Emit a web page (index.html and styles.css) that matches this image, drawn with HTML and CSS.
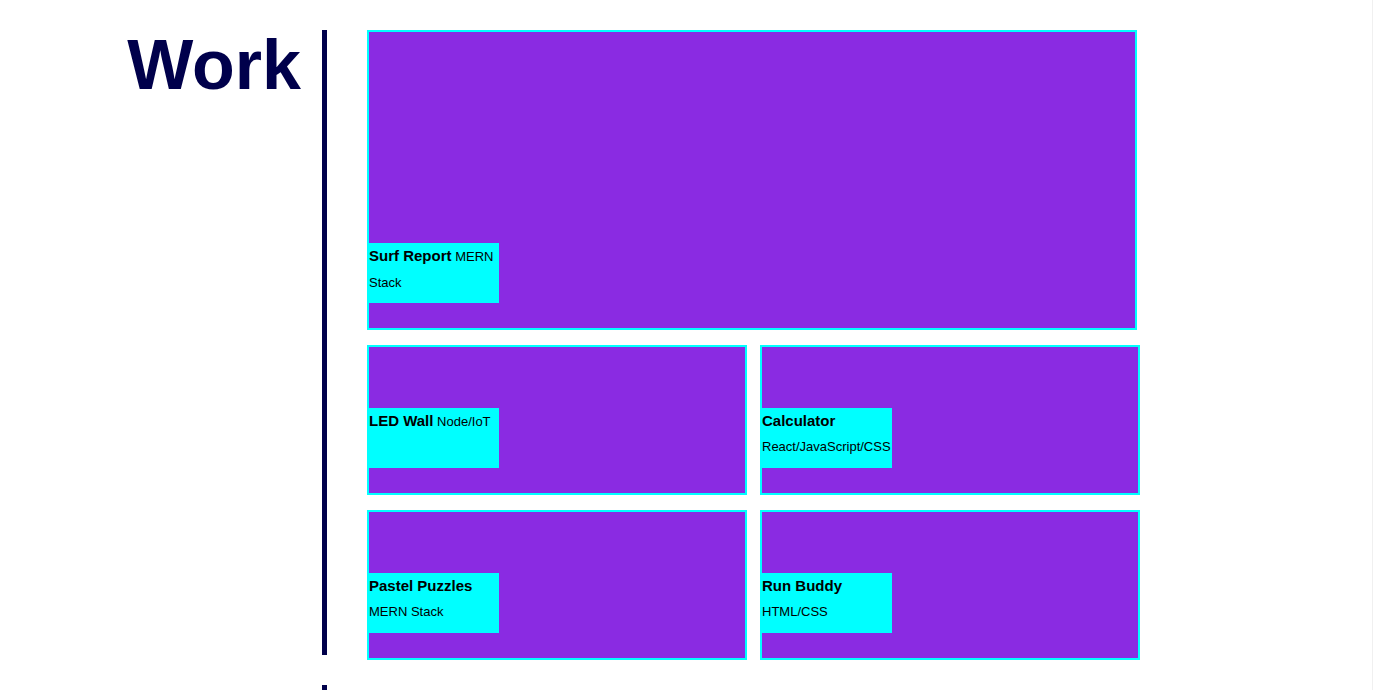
FILE: index.html
```
<!DOCTYPE html>
<html lang="en">
<head>
<meta charset="utf-8">
<title>Work</title>
<link rel="stylesheet" href="styles.css">
</head>
<body>
<main class="page">
  <section class="section">
    <h2 class="section-title">Work</h2>
    <div class="projects">
      <article class="card card-featured"><div class="label"><h3>Surf Report</h3> <span>MERN Stack</span></div></article>
      <article class="card"><div class="label"><h3>LED Wall</h3> <span>Node/IoT</span></div></article>
      <article class="card"><div class="label"><h3>Calculator</h3> <span>React/JavaScript/CSS</span></div></article>
      <article class="card"><div class="label"><h3>Pastel Puzzles</h3> <span>MERN Stack</span></div></article>
      <article class="card"><div class="label"><h3>Run Buddy</h3> <span>HTML/CSS</span></div></article>
    </div>
  </section>
  <section class="section">
    <div class="section-title"></div>
    <div class="projects"></div>
  </section>
</main>
</body>
</html>
```
FILE: styles.css
```
* {
  box-sizing: border-box;
}

body {
  margin: 0;
  background: #fff;
  color: #000;
  font-family: "Liberation Sans", Arial, sans-serif;
}

.page {
  height: 100vh;
  overflow: hidden;
  border-right: 1px solid #f0f0f0;
}

.section {
  display: grid;
  grid-template-columns: 322px 1fr;
  margin: 30px 0;
}

.section-title {
  margin: 0;
  padding-right: 21px;
  color: #00004b;
  font-size: 70px;
  line-height: 70px;
  text-align: right;
}

.projects {
  display: grid;
  grid-template-columns: repeat(2, 380px);
  align-content: start;
  gap: 15px 13px;
  height: 625px;
  padding-left: 40px;
  border-left: 5px solid #00004b;
}

.card {
  display: flex;
  align-items: flex-end;
  height: 150px;
  padding-bottom: 25px;
  border: 2px solid #00ffff;
  background: #8a2be2;
}

.card-featured {
  grid-column: 1 / -1;
  height: 300px;
  margin-right: 3px;
}

.label {
  width: 130px;
  height: 60px;
  background: #00ffff;
  font-size: 13px;
  line-height: 25px;
}

.card-featured .label {
  line-height: 26px;
}

.label h3 {
  display: inline;
  margin: 0;
  font-size: 15px;
}
```
